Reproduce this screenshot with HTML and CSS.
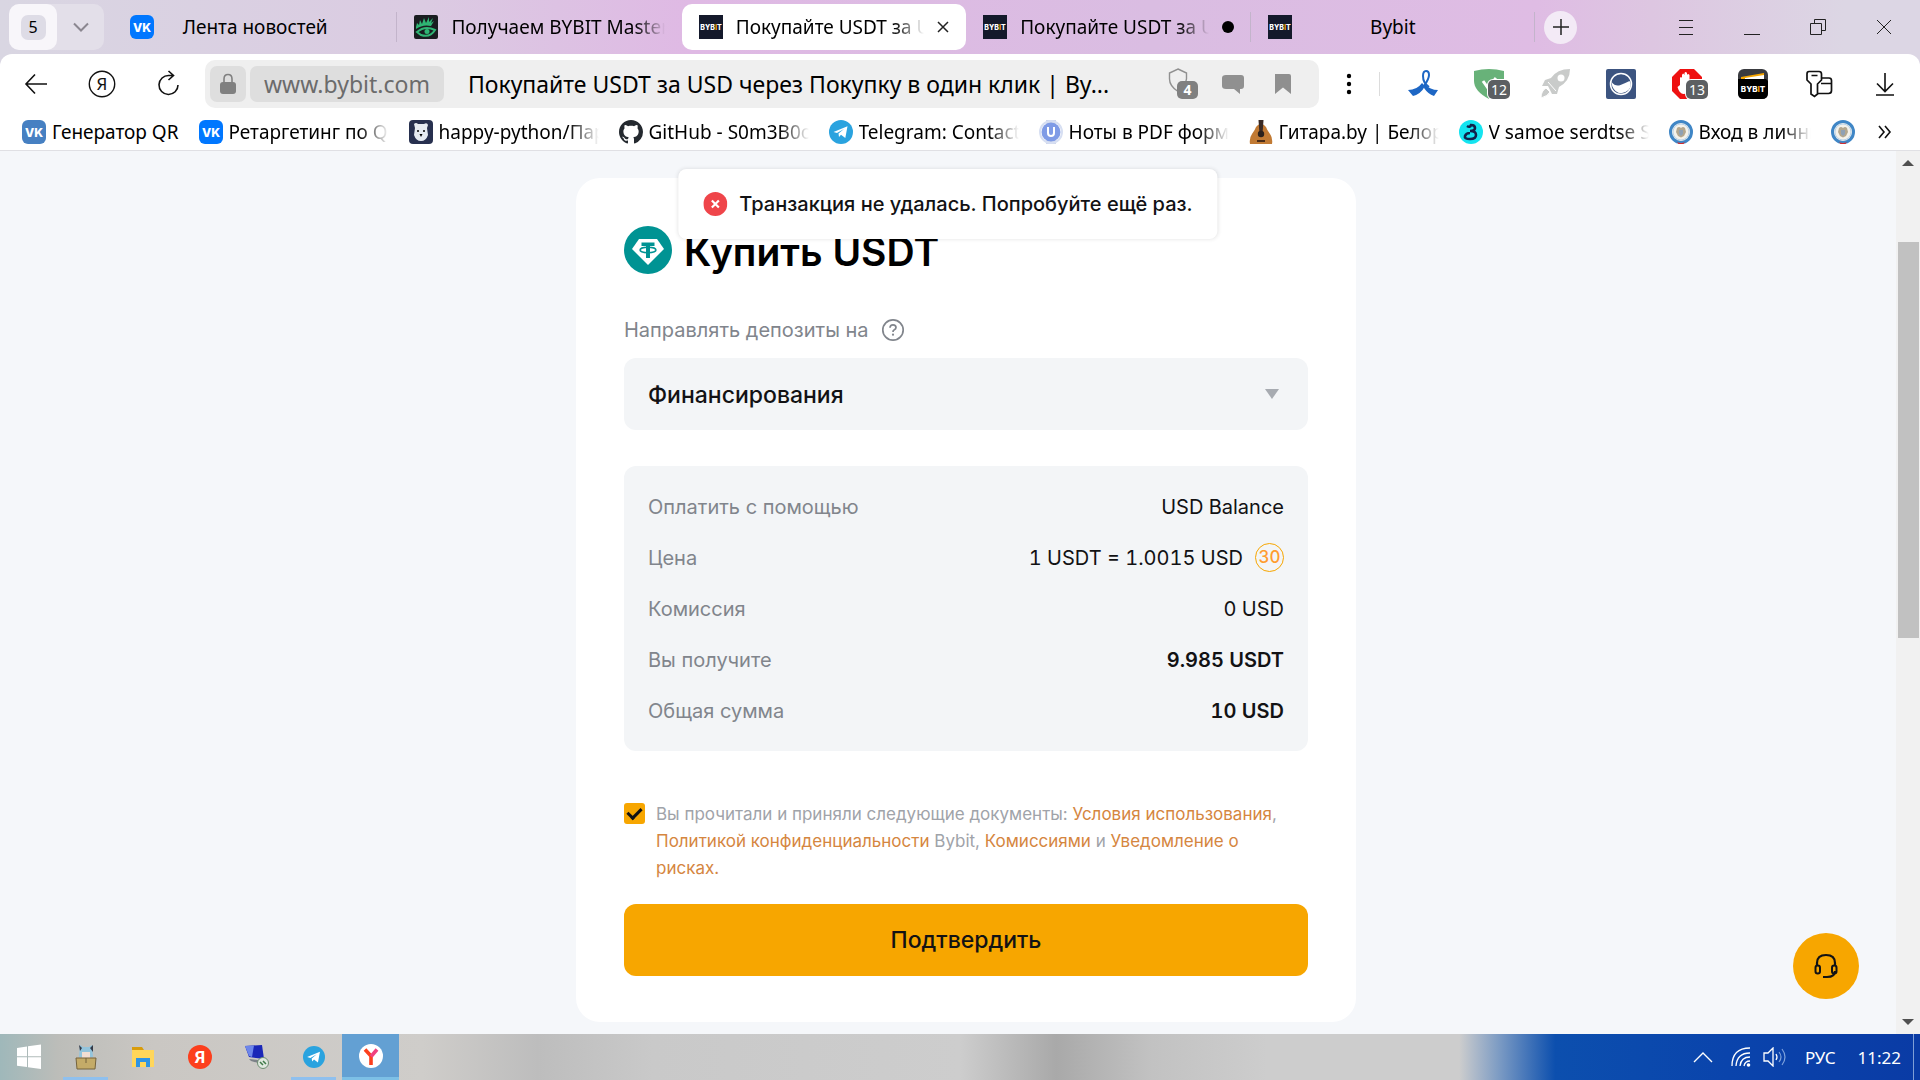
FILE: index.html
```html
<!DOCTYPE html>
<html lang="ru">
<head>
  <meta charset="UTF-8">
  <meta name="viewport" content="width=device-width, initial-scale=1.0">
  <title>Покупайте USDT за USD через Покупку в один клик | Bybit</title>
  <link rel="stylesheet" href="styles.css">
</head>
<body>
  <!-- Общие иконки -->
  <svg class="sprite" aria-hidden="true">
    <symbol id="vk" viewBox="0 0 24 24">
      <rect width="24" height="24" rx="6" fill="currentColor"/>
      <text x="12" y="16.500" text-anchor="middle" font-family="Inter, sans-serif" font-size="12" font-weight="800" fill="#fff">VK</text>
    </symbol>
    <symbol id="bybit" viewBox="0 0 24 24">
      <rect width="24" height="24" fill="#14192b"/>
      <text x="12" y="15" text-anchor="middle" font-family="Inter, sans-serif" font-size="7" font-weight="800" fill="#fff">BYB<tspan fill="#f7a600">I</tspan>T</text>
    </symbol>
    <symbol id="telegram" viewBox="0 0 24 24">
      <circle cx="12" cy="12" r="12" fill="#2aa3df"/>
      <path d="M4.500 12 18.500 6.200 16.300 18 12 14.800 10 17 9.500 13.500 15 9 8 13z" fill="#fff"/>
    </symbol>
    <symbol id="emblem" viewBox="0 0 24 24">
      <circle cx="12" cy="12" r="10.500" fill="#f5f2ea" stroke="#3f86c6" stroke-width="3"/>
      <circle cx="12" cy="12" r="8" fill="none" stroke="#b9d3ea"/>
      <path d="M8 8q2-2 4 0 2-2 4 0l1 4-2 4-3 1.500L9 16l-2-4z" fill="#b3a78f"/>
      <path d="M10 10h4v4l-2 2-2-2z" fill="#8fa1b5"/>
      <path d="M8 22q4 2 8 0l-1.500 2h-5z" fill="#d22f2f"/>
    </symbol>
  </svg>

  <header class="browser">
    <div class="tabstrip">
      <div class="tab-group">
        <button class="group-count" aria-label="Группа вкладок"><span>5</span></button>
        <button class="group-more" aria-label="Показать группы"><svg width="18" height="18" viewBox="0 0 18 18"><path d="M2 5.500 9 12.500 16 5.500" fill="none" stroke="#8b8790" stroke-width="2"/></svg></button>
      </div>
      <div class="tabs">
        <div class="tab tab-center">
          <svg class="favicon vk-blue"><use href="#vk"/></svg>
          <button class="tab-title">Лента новостей</button>
        </div>
        <div class="tab">
          <svg class="favicon" viewBox="0 0 24 24">
            <rect width="24" height="24" rx="2" fill="#1a1d20"/>
            <path d="M2 12 3 8l2 2 1-5 2 4 2-6 2 5 3-6v5l4-4-2 5 3-2-3 5q-8-2-15 3z" fill="#2fb574"/>
            <path d="M3 17q8-7 18-2-5 8-14 5z" fill="none" stroke="#2fb574" stroke-width="2"/>
            <circle cx="13" cy="16.500" r="2.500" fill="#2fb574"/>
          </svg>
          <button class="tab-title fade">Получаем BYBIT Master</button>
        </div>
        <div class="tab tab-active">
          <svg class="favicon"><use href="#bybit"/></svg>
          <button class="tab-title fade">Покупайте USDT за U</button>
          <button class="tab-close" aria-label="Закрыть вкладку"><svg width="12" height="12" viewBox="0 0 12 12"><path d="M1 1l10 10M11 1 1 11" stroke="#222" stroke-width="1.500"/></svg></button>
        </div>
        <div class="tab">
          <svg class="favicon"><use href="#bybit"/></svg>
          <button class="tab-title fade">Покупайте USDT за U</button>
          <span class="tab-dot"></span>
        </div>
        <div class="tab tab-center">
          <svg class="favicon"><use href="#bybit"/></svg>
          <button class="tab-title">Bybit</button>
        </div>
      </div>
      <button class="new-tab" aria-label="Новая вкладка"><svg width="18" height="18" viewBox="0 0 18 18"><path d="M9 1v16M1 9h16" stroke="#222" stroke-width="1.500"/></svg></button>
      <div class="window-controls">
        <button aria-label="Меню"><svg width="16" height="16" viewBox="0 0 16 16"><path d="M1 1.500h14M1 8.500h14M1 15.500h14" stroke="#222"/></svg></button>
        <button class="minimize" aria-label="Свернуть"><svg width="16" height="16" viewBox="0 0 16 16"><path d="M0 15.500h16" stroke="#222"/></svg></button>
        <button aria-label="Развернуть"><svg width="18" height="18" viewBox="0 0 18 18"><path d="M1.500 5.500h11v11h-11zM5.500 5V1.500h11v11H13" fill="none" stroke="#222"/></svg></button>
        <button aria-label="Закрыть"><svg width="16" height="16" viewBox="0 0 16 16"><path d="M1 1l14 14M15 1 1 15" stroke="#222"/></svg></button>
      </div>
    </div>

    <div class="toolbar">
      <button class="tool" aria-label="Назад"><svg width="24" height="24" viewBox="0 0 24 24"><path d="M23 12H2M11 2.500 2 12l9 9.500" fill="none" stroke="#111" stroke-width="1.600"/></svg></button>
      <button class="tool" aria-label="Яндекс"><svg width="28" height="28" viewBox="0 0 28 28"><circle cx="14" cy="14" r="12.700" fill="none" stroke="#111" stroke-width="1.400"/><text x="14" y="20" text-anchor="middle" font-family="Noto Sans, sans-serif" font-size="17" fill="#111">Я</text></svg></button>
      <button class="tool" aria-label="Обновить"><svg width="24" height="28" viewBox="0 0 24 28"><path d="M17.500 5.500H13a9.500 9.500 0 1 0 9 9.500M12.500 1l5 4.500-5 4.500" fill="none" stroke="#111" stroke-width="1.600"/></svg></button>

      <div class="omnibox">
        <button class="chip" aria-label="Защищённое соединение"><svg width="18" height="22" viewBox="0 0 18 22"><rect x="1" y="9" width="16" height="12" rx="3" fill="#808080"/><path d="M5 10V6q0-4.500 4-4.500T13 6v4" fill="none" stroke="#808080" stroke-width="1.600"/></svg></button>
        <button class="chip chip-url">www.bybit.com</button>
        <input class="page-name" type="text" aria-label="Адресная строка" value="Покупайте USDT за USD через Покупку в один клик | By...">
        <button class="omni-icon" aria-label="Защита">
          <svg width="30" height="32" viewBox="0 0 30 32"><path d="M10 1 18.500 5v6L17 17l-7 6.500Q1.500 18 1.500 11V5z" fill="none" stroke="#909090" stroke-width="1.400"/><rect x="9" y="13" width="21" height="18" rx="5" fill="#808080"/><text x="19.500" y="27" text-anchor="middle" font-family="Noto Sans, sans-serif" font-size="14" font-weight="700" fill="#fff">4</text></svg>
        </button>
        <button class="omni-icon" aria-label="Отзывы"><svg width="22" height="20" viewBox="0 0 22 20"><path d="M4 1h15q3 0 3 3v8q0 3-3 3h-1v5l-6-5H4q-4 0-4-3V4q0-3 4-3z" fill="#909090"/></svg></button>
        <button class="omni-icon" aria-label="Закладка"><svg width="16" height="20" viewBox="0 0 16 20"><path d="M0 0h14q2 0 2 2v18l-8-6.500L0 20z" fill="#8f8f8f"/></svg></button>
      </div>

      <button class="tool tool-dots" aria-label="Ещё"><svg width="6" height="22" viewBox="0 0 6 22"><circle cx="3" cy="3" r="2.200"/><circle cx="3" cy="11" r="2.200"/><circle cx="3" cy="19" r="2.200"/></svg></button>
      <div class="extensions">
        <button class="tool" aria-label="Лента"><svg width="30" height="28" viewBox="0 0 30 28"><path d="M16 16Q21 9 21 5q0-4-3-4t-3 5q0 7 6 11" fill="none" stroke="#1d66c4" stroke-width="2"/><path d="M0 20q9 0 14-7l3 3q-4 8-12 10zM17 14q5 6 13 6l-4 6q-6-2-10-8z" fill="#1d66c4"/></svg></button>
        <button class="tool" aria-label="Adguard"><svg width="30" height="30" viewBox="0 0 30 30"><path d="M0 2q15-4 30 0v10q-1 12-15 18Q0 22 0 12z" fill="#68b279"/><path d="M9 12l5 7 8-10" fill="none" stroke="#fff" stroke-width="3"/></svg><span class="badge">12</span></button>
        <button class="tool" aria-label="Ускорение"><svg width="30" height="30" viewBox="0 0 30 30"><path d="M30 0Q17 0 11 9l-6 2-3 6h6l4 8h5l2-7q11-6 11-18z" fill="#c9cbca"/><circle cx="21" cy="9" r="3.500" fill="#fff"/><path d="M8 13l8 9M6 19q-5 3-5 10 7-2 9-6z" fill="#c9cbca" stroke="#fff"/></svg></button>
        <button class="tool" aria-label="Расширение"><svg width="30" height="30" viewBox="0 0 30 30"><rect width="30" height="30" rx="2" fill="#3c5480"/><circle cx="15" cy="15" r="10.500" fill="#3c5480" stroke="#fff" stroke-width="1.500"/><path d="M5.500 13q4 5 9 3t9-4q3 4-1 9-7 6-13 1-4-4-4-9z" fill="#fff"/></svg></button>
        <button class="tool" aria-label="Блокировщик"><svg width="30" height="30" viewBox="0 0 30 30"><path d="M8 0h14l8 8v14l-8 8H8l-8-8V8z" fill="#ee1111"/><path d="M8 16V9q1-2 2 0v5-8q1-3 2.500 0v7-9q1-2 2.500 0v9-7q1-2 2.500 0v14q-2 5-6 5t-6-7z" fill="#fff"/></svg><span class="badge">13</span></button>
        <button class="tool" aria-label="Bybit"><svg width="30" height="30" viewBox="0 0 30 30"><rect width="30" height="30" rx="6" fill="#3a3b40"/><path d="M3 8 26 4v6H3z" fill="#f7a600"/><path d="M7 9 26 6v4H7z" fill="#fff"/><path d="M0 10h28l2 2v12q0 6-6 6H6q-6 0-6-6z" fill="#000"/><text x="15" y="23" text-anchor="middle" font-family="Inter, sans-serif" font-size="8" font-weight="800" fill="#fff">BYB<tspan fill="#f7a600">I</tspan>T</text></svg></button>
        <button class="tool" aria-label="Пароли"><svg width="28" height="28" viewBox="0 0 28 28"><path d="M4 1.500h10q2.500 0 2.500 2.500v6l-4 4v10l-3 2.500-3.500-2.500V14l-4-4V4q0-2.500 2-2.500zM6.500 5.500h6" fill="none" stroke="#111" stroke-width="1.700"/><path d="M17 8h7q2.500 0 2.500 2.500v10q0 3-3 3H13M16 13.500h10" fill="none" stroke="#111" stroke-width="1.700"/></svg></button>
        <button class="tool" aria-label="Загрузки"><svg width="20" height="24" viewBox="0 0 20 24"><path d="M10 1v18M2 11.500l8 8 8-8M1 23h18" fill="none" stroke="#111" stroke-width="1.600"/></svg></button>
      </div>
    </div>

    <nav class="bookmarks">
      <a href="#"><svg class="favicon vk-muted"><use href="#vk"/></svg><span>Генератор QR</span></a>
      <a href="#"><svg class="favicon vk-blue"><use href="#vk"/></svg><span class="fade">Ретаргетинг по Q</span></a>
      <a href="#">
        <svg class="favicon" viewBox="0 0 24 24"><rect width="24" height="24" rx="4" fill="#27304f"/><path d="M5 4q2-2 4 0h6q3-2 4 1l-1 3 1 7q-2 6-7 6t-7-6l1-7z" fill="#e6ebf2"/><circle cx="9" cy="11" r="1"/><circle cx="15" cy="11" r="1"/><path d="M10.500 14h3L12 17z"/></svg>
        <span class="fade">happy-python/Пар</span>
      </a>
      <a href="#">
        <svg class="favicon" viewBox="0 0 16 16"><path fill="#24292f" d="M8 0C3.580 0 0 3.580 0 8c0 3.540 2.290 6.530 5.470 7.590.4.070.55-.17.55-.38 0-.19-.01-.82-.01-1.490-2.010.37-2.530-.49-2.690-.94-.09-.23-.48-.94-.82-1.130-.28-.15-.68-.52-.01-.53.63-.01 1.080.58 1.230.82.72 1.210 1.870.87 2.330.66.07-.52.28-.87.51-1.070-1.780-.2-3.640-.89-3.640-3.950 0-.87.31-1.590.82-2.150-.08-.2-.36-1.020.08-2.120 0 0 .67-.21 2.200.82.64-.18 1.320-.27 2-.27s1.360.09 2 .27c1.530-1.040 2.200-.82 2.200-.82.44 1.100.16 1.920.08 2.120.51.56.82 1.270.82 2.150 0 3.070-1.870 3.750-3.650 3.950.29.25.54.73.54 1.480 0 1.070-.01 1.930-.01 2.200 0 .21.15.46.55.38A8 8 0 0 0 16 8c0-4.420-3.580-8-8-8z"/></svg>
        <span class="fade">GitHub - S0m3B0o</span>
      </a>
      <a href="#"><svg class="favicon"><use href="#telegram"/></svg><span class="fade">Telegram: Contact</span></a>
      <a href="#">
        <svg class="favicon" viewBox="0 0 24 24"><path d="M7 0h10v24H7z" fill="#cdd5ea"/><circle cx="12" cy="12" r="9.500" fill="#7f9be6"/><circle cx="12" cy="12" r="11" fill="none" stroke="#d7dff2" stroke-width="2"/><path d="M9 7v6q0 3 3 3t3-3V7" fill="none" stroke="#fff" stroke-width="2"/></svg>
        <span class="fade">Ноты в PDF форм</span>
      </a>
      <a href="#">
        <svg class="favicon" viewBox="0 0 24 24"><path d="M1 24q-1-6 2-10 3-4 4-7 2-3 5-3t5 3q1 3 4 7 3 4 2 10z" fill="#c17a34"/><path d="M9.500 0h5l-1 14h-3z" fill="#3a2a24"/><circle cx="12" cy="14" r="3.200" fill="#2b211d"/><path d="M8 21h8" stroke="#4b2d17" stroke-width="2"/></svg>
        <span class="fade">Гитара.by | Белор</span>
      </a>
      <a href="#">
        <svg class="favicon" viewBox="0 0 24 24"><circle cx="12" cy="12" r="12" fill="#14e4f0"/><path d="M8 6q3 2 4-1 4 0 4 3t-5 3q6 0 6 4t-6 4-5-3 5-3" fill="none" stroke="#12204a" stroke-width="2.600"/></svg>
        <span class="fade">V samoe serdtse S</span>
      </a>
      <a href="#" class="bookmark-short"><svg class="favicon"><use href="#emblem"/></svg><span class="fade">Вход в личнь</span></a>
      <a href="#" aria-label="Личный кабинет"><svg class="favicon"><use href="#emblem"/></svg></a>
      <button class="bookmarks-more" aria-label="Другие закладки"><svg width="14" height="14" viewBox="0 0 14 14"><path d="M1 1l5 6-5 6M7 1l5 6-5 6" fill="none" stroke="#111" stroke-width="1.600"/></svg></button>
    </nav>
  </header>

  <main class="viewport">
    <div class="page">
      <div class="toast" role="alert">
        <svg width="24" height="24" viewBox="0 0 24 24"><circle cx="12" cy="12" r="12" fill="#ef454a"/><path d="M8.500 8.500l7 7M15.500 8.500l-7 7" stroke="#fff" stroke-width="2.200"/></svg>
        <span>Транзакция не удалась. Попробуйте ещё раз.</span>
      </div>

      <form class="card">
        <h1>
          <svg width="48" height="48" viewBox="0 0 48 48"><circle cx="24" cy="24" r="24" fill="#009393"/><path d="M15 13h18l7 10-16 16L8 23z" fill="#fff"/><path d="M17.500 16.500h13v3.500h-4.500v12h-4V20h-4.500z" fill="#009393"/><ellipse cx="24" cy="24" rx="8" ry="2.700" fill="none" stroke="#009393" stroke-width="1.400"/></svg>
          Купить USDT
        </h1>

        <div class="field-label">
          <label for="account">Направлять депозиты на</label>
          <svg width="24" height="24" viewBox="0 0 24 24"><circle cx="12" cy="12" r="10.200" fill="none" stroke="#81858c" stroke-width="1.700"/><path d="M9 9.800Q9 6.800 12 6.800t3 2.700q0 1.500-1.600 2.300T12 14" fill="none" stroke="#81858c" stroke-width="1.700"/><circle cx="12" cy="16.700" r="1.100" fill="#81858c"/></svg>
        </div>
        <div class="select-wrap">
          <select id="account">
            <option>Финансирования</option>
          </select>
        </div>

        <dl class="summary">
          <div><dt>Оплатить с помощью</dt><dd>USD Balance</dd></div>
          <div><dt>Цена</dt><dd>1 USDT = 1.0015 USD <span class="timer">30</span></dd></div>
          <div><dt>Комиссия</dt><dd>0 USD</dd></div>
          <div><dt>Вы получите</dt><dd class="strong">9.985 USDT</dd></div>
          <div><dt>Общая сумма</dt><dd class="strong">10 USD</dd></div>
        </dl>

        <div class="terms">
          <input type="checkbox" id="agree" checked>
          <label for="agree">Вы прочитали и приняли следующие документы: <a href="#">Условия использования</a>, <a href="#">Политикой конфиденциальности</a> Bybit, <a href="#">Комиссиями</a> и <a href="#">Уведомление о рисках.</a></label>
        </div>

        <button type="button" class="submit">Подтвердить</button>
      </form>

      <button class="support" aria-label="Поддержка">
        <svg width="26" height="26" viewBox="0 0 26 26"><path d="M4 13V10q0-8 9-8t9 8v3M22 18q0 6-8 6h-4" fill="none" stroke="#121214" stroke-width="2.200"/><rect x="2.500" y="12.500" width="4.500" height="8" rx="2.200" fill="none" stroke="#121214" stroke-width="2"/><rect x="19" y="12.500" width="4.500" height="8" rx="2.200" fill="none" stroke="#121214" stroke-width="2"/></svg>
      </button>
    </div>

    <div class="scrollbar">
      <svg width="12" height="6" viewBox="0 0 12 6"><path d="M0 6 6 0l6 6z" fill="#505050"/></svg>
      <div class="scroll-track"><div class="scroll-thumb"></div></div>
      <svg width="12" height="6" viewBox="0 0 12 6"><path d="M0 0h12L6 6z" fill="#505050"/></svg>
    </div>
  </main>

  <footer class="taskbar">
    <button class="task" aria-label="Пуск"><svg width="26" height="26" viewBox="0 0 26 26"><path d="M1 4 11 2.500v9.800H1zM12 2.300 25 .5v11.800H12zM1 13.200h10V23L1 21.700zM12 13.200h13V25l-13-1.800z" fill="#fff"/></svg></button>
    <button class="task running" aria-label="Менеджер файлов"><svg width="22" height="26" viewBox="0 0 22 26"><path d="M5 1l3 2h6l3-2 1 12H4z" fill="#93c4dc"/><path d="M4 1l3 3-2 3zM18 1l-3 3 3 4z" fill="#333a48"/><path d="M7 8h8v6H7z" fill="#f2ded3"/><path d="M1 14h20l-1 11H2z" fill="#c4ab68" stroke="#75633c"/><path d="M11 14v5" stroke="#75633c"/></svg></button>
    <button class="task" aria-label="Проводник"><svg width="24" height="22" viewBox="0 0 24 22"><path d="M1 1h10l2 3H1z" fill="#d99c0b"/><path d="M1 4h22v17H1z" fill="#ffd65a"/><path d="M5 12h14v9h-4v-5H9v5H5z" fill="#2f94e4"/></svg></button>
    <button class="task" aria-label="Яндекс"><svg width="24" height="24" viewBox="0 0 24 24"><circle cx="12" cy="12" r="12" fill="#fc3f1d"/><text x="12" y="18" text-anchor="middle" font-family="Roboto, sans-serif" font-size="17" font-weight="700" fill="#fff">Я</text></svg></button>
    <button class="task" aria-label="Удалённый доступ"><svg width="26" height="26" viewBox="0 0 26 26"><path d="M1 2l17-1 2 14-15-2z" fill="#1a27b8"/><path d="M1 2l9-.5L8 13l-3-1z" fill="#6d86ea"/><path d="M5 15l9 1v3l-7-2z" fill="#7c8188"/><circle cx="19" cy="19" r="5.500" fill="#dfe8df" stroke="#6f8f73"/><path d="M16 18l3 3M19 17l3 3" stroke="#3f7a48" stroke-width="1.500"/></svg></button>
    <button class="task running" aria-label="Telegram"><svg class="favicon-small"><use href="#telegram"/></svg></button>
    <button class="task task-active" aria-label="Яндекс Браузер"><svg width="24" height="24" viewBox="0 0 24 24"><circle cx="12" cy="12" r="12" fill="#fff"/><path d="M6 5.500l6 6.500v9" fill="none" stroke="#fc3f1d" stroke-width="3.600"/><path d="M12 12.500l6-7" stroke="#f0417f" stroke-width="3.600"/></svg></button>
    <div class="tray">
      <svg width="20" height="12" viewBox="0 0 20 12"><path d="M1 11 10 2l9 9" fill="none" stroke="#fff" stroke-width="1.400"/></svg>
      <svg class="wifi" width="20" height="20" viewBox="0 0 20 20"><path d="M1 19Q1 1 19 1M5 19Q6 6 19 6M9 19q1-9 10-9M13 19q1-5 6-5" fill="none" stroke="#fff" stroke-width="1.300"/><circle cx="17.500" cy="18" r="1.800" fill="#fff"/></svg>
      <svg class="sound" width="24" height="20" viewBox="0 0 24 20"><path d="M1 6h4l5-5v18l-5-5H1z" fill="none" stroke="#fff" stroke-width="1.300"/><path d="M13 7q2 3 0 6" fill="none" stroke="#fff" stroke-width="1.300"/><path d="M16 5q4 5 0 10M19 2q6 8 0 16" fill="none" stroke="#7ea2dc" stroke-width="1.200"/></svg>
      <span class="lang">РУС</span>
      <time>11:22</time>
    </div>
  </footer>
</body>
</html>
```
FILE: styles.css
```css
* {
  box-sizing: border-box;
}

body {
  margin: 0;
  height: 100vh;
  display: flex;
  flex-direction: column;
  overflow: hidden;
  font-family: "Noto Sans", sans-serif;
  font-size: 19px;
  color: #000;
}

button,
input,
select {
  font: inherit;
  color: inherit;
  background: none;
  border: 0;
  margin: 0;
  padding: 0;
}

button {
  display: flex;
  align-items: center;
  justify-content: center;
  cursor: pointer;
}

a {
  text-decoration: none;
}

svg {
  flex: none;
}

.sprite {
  display: none;
}

.favicon {
  width: 24px;
  height: 24px;
}

.favicon-small {
  width: 22px;
  height: 22px;
}

.vk-blue {
  color: #0077ff;
}

.vk-muted {
  color: #4680c2;
}

.fade {
  -webkit-mask-image: linear-gradient(to right, #000 calc(100% - 30px), transparent);
  mask-image: linear-gradient(to right, #000 calc(100% - 30px), transparent);
}

/* ----------- Вкладки ----------- */

.browser {
  background: linear-gradient(to right, #d9d6e2 0, #dbcbe2 22%, #dfb9e4 36%, #dabde2 60%, #dfbce4 80%, #ddc6e1 86%, #dcd6e4 96%);
}

.tabstrip {
  display: flex;
  align-items: center;
  height: 54px;
}

.tab-group {
  display: flex;
  margin: 0 9px;
  height: 46px;
  width: 95px;
  border-radius: 10px;
  background: #e3dfe9;
}

.group-count {
  width: 48px;
  border-radius: 10px;
  background: #f8f6fa;
}

.group-count span {
  width: 25px;
  line-height: 25px;
  border-radius: 7px;
  background: #dedce6;
  font-size: 16px;
}

.group-more {
  flex: 1;
}

.tabs {
  flex: 0 1 1422px;
  display: grid;
  grid-template-columns: repeat(5, minmax(0, 1fr));
  min-width: 0;
}

.tab {
  position: relative;
  height: 46px;
  display: flex;
  align-items: center;
  gap: 13px;
  padding: 0 17px;
}

.tab-title {
  flex: 1;
  min-width: 0;
  justify-content: flex-start;
  overflow: hidden;
  white-space: nowrap;
}

.tab-center {
  padding-right: 54px;
}

.tab-center .tab-title {
  justify-content: center;
}

.tab-active {
  background: #fff;
  border-radius: 10px;
}

.tab-dot {
  width: 12px;
  height: 12px;
  border-radius: 50%;
  background: #000;
}

/* разделитель между неактивными вкладками */
.tab:nth-child(1)::after,
.tab:nth-child(4)::after,
.tab:nth-child(5)::after {
  content: "";
  position: absolute;
  right: 0;
  top: 8px;
  width: 1px;
  height: 30px;
  background: #c3b4cb;
}

.new-tab {
  width: 33px;
  height: 33px;
  margin-left: 9px;
  border-radius: 50%;
  background: #f3eaf6;
}

.window-controls {
  display: flex;
  margin-left: auto;
  margin-right: 3px;
}

.window-controls button {
  width: 66px;
  height: 46px;
}

/* ----------- Панель адреса ----------- */

.toolbar {
  display: flex;
  align-items: center;
  height: 60px;
  padding: 0 2px 0 3px;
  background: #fff;
  border-radius: 12px 12px 0 0;
}

.tool {
  position: relative;
  width: 66px;
  height: 48px;
}

.tool-dots {
  width: 60px;
}

.badge {
  position: absolute;
  left: 32px;
  top: 20px;
  width: 22px;
  line-height: 19px;
  border-radius: 5px;
  background: #5c5f62;
  box-shadow: 0 0 0 1px #fff;
  color: #fff;
  font-size: 14px;
  text-align: center;
}

.omnibox {
  flex: 1;
  min-width: 0;
  display: flex;
  align-items: center;
  gap: 4px;
  height: 48px;
  margin-left: 4px;
  padding: 0 13px 0 5px;
  border-radius: 10px;
  background: #efefef;
}

.chip {
  width: 36px;
  height: 36px;
  border-radius: 7px;
  background: #dedede;
}

.chip-url {
  width: auto;
  padding: 0 14px;
  font-size: 23px;
  color: #6b6b6b;
}

.page-name {
  flex: 1;
  min-width: 0;
  padding-left: 20px;
  font-size: 23px;
  text-overflow: ellipsis;
}

.omni-icon {
  width: 46px;
  height: 36px;
}

.extensions {
  position: relative;
  display: flex;
  padding-left: 11px;
}

.extensions::before {
  content: "";
  position: absolute;
  left: 0;
  top: 12px;
  width: 1px;
  height: 24px;
  background: #dcdcdc;
}

/* ----------- Закладки ----------- */

.bookmarks {
  display: flex;
  align-items: center;
  gap: 20px;
  height: 37px;
  padding: 0 28px 0 22px;
  background: #fff;
  border-bottom: 1px solid #e0e0e4;
}

.bookmarks a {
  display: flex;
  align-items: center;
  gap: 6px;
  color: #000;
}

.bookmarks a .fade {
  width: 160px;
  overflow: hidden;
  white-space: nowrap;
}

.bookmarks .bookmark-short .fade {
  width: 112px;
}

.bookmarks-more {
  margin-left: auto;
}

/* ----------- Страница ----------- */

.viewport {
  flex: 1;
  min-height: 0;
  display: flex;
}

.page {
  position: relative;
  flex: 1;
  min-width: 0;
  padding: 27px 0 0 36px;
  overflow: hidden;
  background: #f5f7fa;
  font-family: Inter, sans-serif;
  font-size: 20px;
  color: #121214;
}

.card {
  max-width: 780px;
  margin: 0 auto;
  padding: 48px 48px 46px;
  border-radius: 24px;
  background: #fff;
}

.toast {
  position: absolute;
  top: 18px;
  left: 50%;
  transform: translateX(-50%);
  display: flex;
  align-items: center;
  gap: 12px;
  height: 70px;
  padding: 0 25px;
  border-radius: 8px;
  background: #fff;
  box-shadow: 0 0 4px rgba(18, 18, 20, 0.12);
  font-weight: 500;
  white-space: nowrap;
}

h1 {
  display: flex;
  gap: 12px;
  margin: 0 0 40px;
  font-size: 39px;
  line-height: 52px;
  font-weight: 600;
  color: #000;
}

.field-label {
  display: flex;
  align-items: center;
  gap: 12px;
  margin-bottom: 16px;
  line-height: 24px;
  color: #81858c;
}

.select-wrap {
  position: relative;
  margin-bottom: 36px;
}

.select-wrap::after {
  content: "";
  position: absolute;
  right: 29px;
  top: 31px;
  border: 7px solid transparent;
  border-top: 10px solid #a7abb1;
  border-bottom: 0;
  pointer-events: none;
}

select {
  appearance: none;
  width: 100%;
  height: 72px;
  padding: 2px 24px 0;
  border-radius: 12px;
  background: #f3f5f7;
  font-size: 23px;
  font-weight: 500;
}

.summary {
  margin: 0 0 48px;
  padding: 15px 24px;
  border-radius: 12px;
  background: #f3f5f7;
}

.summary div {
  display: flex;
  align-items: center;
  justify-content: space-between;
  height: 51px;
}

dt {
  color: #81858c;
}

dd {
  display: flex;
  align-items: center;
  gap: 12px;
  margin: 0;
  font-variant-numeric: tabular-nums;
}

.strong {
  font-weight: 600;
}

.timer {
  width: 29px;
  line-height: 27px;
  border: 1px solid #f7a600;
  border-radius: 50%;
  color: #ff9c2e;
  font-size: 17px;
  font-weight: 500;
  text-align: center;
}

.terms {
  display: flex;
  align-items: flex-start;
  gap: 11px;
  margin-bottom: 22px;
  font-size: 17px;
  line-height: 27px;
  color: #a0a3a9;
}

.terms label {
  padding: 2px 20px 0 0;
}

.terms a {
  color: #d5863f;
}

.terms input {
  appearance: none;
  flex: none;
  width: 21px;
  height: 21px;
  margin-top: 4px;
  border-radius: 3px;
  display: grid;
  place-items: center;
  background: #f7a600;
}

.terms input:checked::before {
  content: "";
  width: 6px;
  height: 11px;
  margin-bottom: 3px;
  border: solid #121214;
  border-width: 0 3px 3px 0;
  transform: rotate(45deg);
}

.submit {
  width: 100%;
  height: 72px;
  border-radius: 12px;
  background: #f7a600;
  font-size: 23px;
  font-weight: 500;
}

.support {
  position: absolute;
  right: 37px;
  bottom: 35px;
  width: 66px;
  height: 66px;
  border-radius: 50%;
  background: #f7a600;
}

.scrollbar {
  width: 24px;
  display: flex;
  flex-direction: column;
  align-items: center;
  padding: 9px 0;
  background: #f1f1f1;
}

.scroll-track {
  flex: 1;
  padding-top: 76px;
}

.scroll-thumb {
  width: 21px;
  height: 51%;
  background: #c1c1c1;
}

/* ----------- Панель задач ----------- */

.taskbar {
  display: flex;
  height: 46px;
  color: #fff;
  font-size: 17px;
  background: linear-gradient(to right, #9fb8ba 0, #bcbdb9 3%, #cac7c3 8%, #cfcdca 22%, #bdbdbd 28%, #c9c9c9 34%, #cdcdcd 50%, #a9a9a9 55%, #c2c2c2 60%, #cdcdcd 66%, #cdcdcd 76%, #7f9dc4 78%, #0c4fae 81%, #0a44ac 90%, #0a3ba5 100%);
}

.task {
  position: relative;
  width: 57px;
}

.running::after {
  content: "";
  position: absolute;
  left: 6px;
  right: 6px;
  bottom: 0;
  height: 3px;
  background: #8fc0ee;
}

.task-active {
  background: #63a0d3;
  border-bottom: 3px solid #7dc0e6;
}

.tray {
  display: flex;
  align-items: center;
  margin-left: auto;
  margin-right: 6px;
  padding-right: 12px;
  border-right: 1px solid #7f9fd6;
}

.wifi {
  margin-left: 18px;
}

.sound {
  margin-left: 12px;
}

.lang {
  margin: 0 22px 0 18px;
}
```
